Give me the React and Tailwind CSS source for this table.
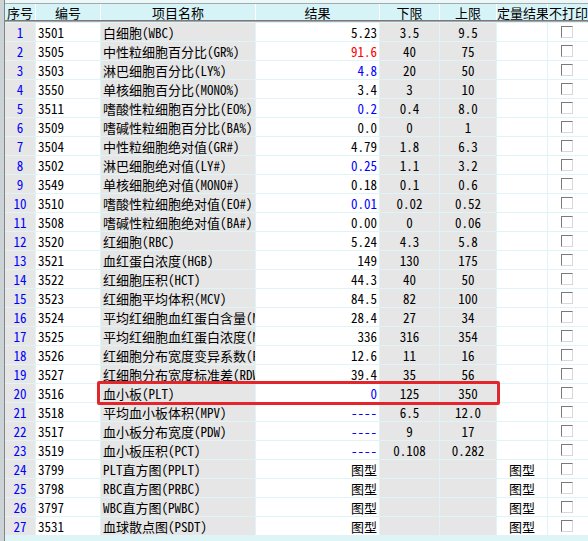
import React from 'react';

const rows = [
  ['1', '3501', '白细胞(WBC)', '5.23', '', '3.5', '9.5', ''],
  ['2', '3505', '中性粒细胞百分比(GR%)', '91.6', 'red', '40', '75', ''],
  ['3', '3503', '淋巴细胞百分比(LY%)', '4.8', 'blue', '20', '50', ''],
  ['4', '3550', '单核细胞百分比(MONO%)', '3.4', '', '3', '10', ''],
  ['5', '3511', '嗜酸性粒细胞百分比(EO%)', '0.2', 'blue', '0.4', '8.0', ''],
  ['6', '3509', '嗜碱性粒细胞百分比(BA%)', '0.0', '', '0', '1', ''],
  ['7', '3504', '中性粒细胞绝对值(GR#)', '4.79', '', '1.8', '6.3', ''],
  ['8', '3502', '淋巴细胞绝对值(LY#)', '0.25', 'blue', '1.1', '3.2', ''],
  ['9', '3549', '单核细胞绝对值(MONO#)', '0.18', '', '0.1', '0.6', ''],
  ['10', '3510', '嗜酸性粒细胞绝对值(EO#)', '0.01', 'blue', '0.02', '0.52', ''],
  ['11', '3508', '嗜碱性粒细胞绝对值(BA#)', '0.00', '', '0', '0.06', ''],
  ['12', '3520', '红细胞(RBC)', '5.24', '', '4.3', '5.8', ''],
  ['13', '3521', '血红蛋白浓度(HGB)', '149', '', '130', '175', ''],
  ['14', '3522', '红细胞压积(HCT)', '44.3', '', '40', '50', ''],
  ['15', '3523', '红细胞平均体积(MCV)', '84.5', '', '82', '100', ''],
  ['16', '3524', '平均红细胞血红蛋白含量(MCH)', '28.4', '', '27', '34', ''],
  ['17', '3525', '平均红细胞血红蛋白浓度(MCHC)', '336', '', '316', '354', ''],
  ['18', '3526', '红细胞分布宽度变异系数(RDW-CV)', '12.6', '', '11', '16', ''],
  ['19', '3527', '红细胞分布宽度标准差(RDW-SD)', '39.4', '', '35', '56', ''],
  ['20', '3516', '血小板(PLT)', '0', 'blue', '125', '350', ''],
  ['21', '3518', '平均血小板体积(MPV)', '----', 'blue', '6.5', '12.0', ''],
  ['22', '3517', '血小板分布宽度(PDW)', '----', 'blue', '9', '17', ''],
  ['23', '3519', '血小板压积(PCT)', '----', 'blue', '0.108', '0.282', ''],
  ['24', '3799', 'PLT直方图(PPLT)', '图型', '', '', '', '图型'],
  ['25', '3798', 'RBC直方图(PRBC)', '图型', '', '', '', '图型'],
  ['26', '3797', 'WBC直方图(PWBC)', '图型', '', '', '', '图型'],
  ['27', '3531', '血球散点图(PSDT)', '图型', '', '', '', '图型'],
];

const cols = 'grid-cols-[30px_64px_154px_123px_59px_56px_50px_60px]';

function Checkbox() {
  return (
    <div className="w-[12px] h-[12px] bg-white border border-t-[#7a7a7a] border-l-[#7a7a7a] border-r-[#d8d8d8] border-b-[#d8d8d8]" />
  );
}

export default function App() {
  return (
    <div
      className="relative w-[588px] h-[541px] overflow-hidden flex bg-[#dff4f6] text-[13px] text-black leading-none"
      style={{ fontFamily: '"Noto Sans Mono CJK SC", "Noto Sans CJK SC", monospace' }}
    >
      {/* left frame */}
      <div className="w-[4px] shrink-0 bg-[#ccd3d7]" />
      <div className="w-px shrink-0 bg-[#858585]" />

      <div className="flex-1 flex flex-col overflow-hidden">
        {/* header */}
        <div className="h-[3px] bg-[#eaf8fa]" />
        <div className="h-px bg-[#a9a9a9]" />
        <div className={`grid ${cols} gap-x-px bg-white h-[16px]`}>
          <div className="bg-[#d6f4f8] flex items-center justify-center">序号</div>
          <div className="bg-[#d6f4f8] flex items-center justify-center">编号</div>
          <div className="bg-[#d6f4f8] flex items-center justify-center">项目名称</div>
          <div className="bg-[#d6f4f8] flex items-center justify-center">结果</div>
          <div className="bg-[#d6f4f8] flex items-center justify-center">下限</div>
          <div className="bg-[#d6f4f8] flex items-center justify-center">上限</div>
          <div className="bg-[#d6f4f8] flex items-center whitespace-nowrap">定量结果</div>
          <div className="bg-[#d6f4f8] flex items-center whitespace-nowrap pl-px">不打印</div>
        </div>
        <div className="h-px bg-[#7a7a7a]" />
        <div className="h-px bg-[#a8a8a8]" />

        {/* body */}
        <div className={`grid ${cols} auto-rows-[18px] gap-px pt-px bg-[#dff4f6]`}>
          {rows.map((r) => (
            <React.Fragment key={r[0]}>
              <div className="bg-[#e6e6e6] flex items-center justify-center text-[#0000ff]">{r[0]}</div>
              <div className="bg-white flex items-center pl-[2px]">{r[1]}</div>
              <div className="bg-[#e6e6e6] flex items-center pl-[2px] whitespace-nowrap overflow-hidden">{r[2]}</div>
              <div
                className={`bg-white flex items-center justify-end pr-[2px] ${
                  r[4] === 'red' ? 'text-[#ff0000]' : r[4] === 'blue' ? 'text-[#0000ff]' : 'text-black'
                }`}
              >
                {r[3]}
              </div>
              <div className="bg-[#e6e6e6] flex items-center justify-center">{r[5]}</div>
              <div className="bg-[#e6e6e6] flex items-center justify-center">{r[6]}</div>
              <div className="bg-white flex items-center justify-center">{r[7]}</div>
              <div className="bg-white flex items-center pl-[13px]">
                <Checkbox />
              </div>
            </React.Fragment>
          ))}
        </div>
      </div>

      {/* highlight box */}
      <div className="absolute left-[97px] top-[381px] w-[403px] h-[24px] border-[3px] border-[#e3262b] rounded-[2px]" />
    </div>
  );
}
